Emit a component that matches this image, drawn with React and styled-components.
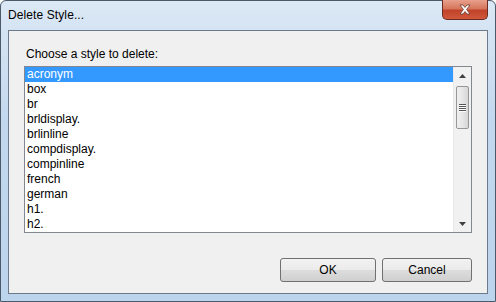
import React, { useState } from 'react';
import styled, { createGlobalStyle } from 'styled-components';

const GlobalStyle = createGlobalStyle`
  html, body {
    margin: 0;
    padding: 0;
    background: #ffffff;
  }
  body {
    font-family: "Liberation Sans", Arial, sans-serif;
    font-size: 12px;
  }
`;

const styles = [
  'acronym',
  'box',
  'br',
  'brldisplay.',
  'brlinline',
  'compdisplay.',
  'compinline',
  'french',
  'german',
  'h1.',
  'h2.',
];

// Aero-ish window frame
const Window = styled.div`
  width: 496px;
  height: 302px;
  box-sizing: border-box;
  display: flex;
  flex-direction: column;
  background: linear-gradient(to bottom, #dbe8f5 0%, #c3d8ee 40%, #bcd4ec 100%);
  border: 1px solid #4a5a6a;
  border-radius: 6px 6px 0 0;
  padding: 0 7px 7px 7px;
`;

const TitleBar = styled.div`
  height: 29px;
  display: flex;
  align-items: flex-start;
  color: #000;
`;

const Title = styled.div`
  padding-top: 7px;
  font-size: 12px;
  letter-spacing: 0.1px;
`;

const CloseButton = styled.div`
  margin-left: auto;
  margin-right: 0;
  margin-top: -1px;
  width: 46px;
  height: 20px;
  box-sizing: border-box;
  border: 1px solid #6b2a22;
  border-top: none;
  border-radius: 0 0 5px 5px;
  background: linear-gradient(to bottom, #e8a08c 0%, #d6765c 45%, #c1432a 55%, #d0583a 100%);
  display: flex;
  align-items: center;
  justify-content: center;
`;

const Client = styled.div`
  flex: 1;
  background: #f0f0f0;
  border: 1px solid #6c7b8c;
  display: flex;
  flex-direction: column;
  padding: 16px 15px 11px 15px;
`;

const Label = styled.div`
  height: 19px;
  padding-left: 2px;
  color: #000;
`;

const ListBox = styled.div`
  height: 167px;
  box-sizing: border-box;
  border: 1px solid #828790;
  background: #fff;
  display: flex;
  overflow: hidden;
`;

const Items = styled.div`
  flex: 1;
  overflow: hidden;
`;

const Item = styled.div`
  height: 15px;
  line-height: 15px;
  padding-left: 2px;
  white-space: nowrap;
  color: ${({ selected }) => (selected ? '#fff' : '#000')};
  background: ${({ selected }) => (selected ? '#3399ff' : 'transparent')};
`;

const ScrollBar = styled.div`
  width: 17px;
  background: #f1f1f1;
  border-left: 1px solid #e8e8e8;
  display: flex;
  flex-direction: column;
  align-items: center;
`;

const Arrow = styled.div`
  height: 17px;
  width: 17px;
  display: flex;
  align-items: center;
  justify-content: center;
`;

const Track = styled.div`
  flex: 1;
  width: 100%;
  display: flex;
  flex-direction: column;
  align-items: center;
`;

const Thumb = styled.div`
  width: 13px;
  height: 43px;
  margin-top: 2px;
  box-sizing: border-box;
  border: 1px solid #979797;
  border-radius: 2px;
  background: linear-gradient(to right, #f0f0f0 0%, #e6e6e6 50%, #d6d6d6 100%);
  display: flex;
  flex-direction: column;
  align-items: center;
  justify-content: center;
  gap: 1px;
`;

const Grip = styled.div`
  width: 7px;
  height: 1px;
  background: #555;
  box-shadow: 0 1px 0 #fff;
`;

const Buttons = styled.div`
  margin-top: auto;
  display: flex;
  justify-content: flex-end;
  gap: 6px;
  padding-right: 0;
`;

const Button = styled.button`
  width: ${({ w }) => w}px;
  height: 24px;
  box-sizing: border-box;
  border: 1px solid #707070;
  border-radius: 3px;
  background: linear-gradient(to bottom, #f2f2f2 0%, #ebebeb 50%, #dddddd 51%, #cfcfcf 100%);
  font-family: "Liberation Sans", Arial, sans-serif;
  font-size: 12px;
  color: #000;
  padding: 0;
`;

const App = () => {
  const [selected, setSelected] = useState(0);

  return (
    <>
      <GlobalStyle />
      <Window>
        <TitleBar>
          <Title>Delete Style...</Title>
          <CloseButton>
            <svg width="14" height="11" viewBox="0 0 14 11">
              <path
                d="M2 1 L5 1 L7 3.5 L9 1 L12 1 L8.6 5.5 L12 10 L9 10 L7 7.5 L5 10 L2 10 L5.4 5.5 Z"
                fill="#fff"
                stroke="#6a3a30"
                strokeWidth="0.8"
              />
            </svg>
          </CloseButton>
        </TitleBar>
        <Client>
          <Label>Choose a style to delete:</Label>
          <ListBox>
            <Items>
              {styles.map((s, i) => (
                <Item key={s} selected={i === selected} onClick={() => setSelected(i)}>
                  {s}
                </Item>
              ))}
            </Items>
            <ScrollBar>
              <Arrow>
                <svg width="7" height="4" viewBox="0 0 7 4">
                  <path d="M0 4 L3.5 0 L7 4 Z" fill="#404040" />
                </svg>
              </Arrow>
              <Track>
                <Thumb>
                  <Grip />
                  <Grip />
                  <Grip />
                  <Grip />
                </Thumb>
              </Track>
              <Arrow>
                <svg width="7" height="4" viewBox="0 0 7 4">
                  <path d="M0 0 L7 0 L3.5 4 Z" fill="#404040" />
                </svg>
              </Arrow>
            </ScrollBar>
          </ListBox>
          <Buttons>
            <Button w={96}>OK</Button>
            <Button w={90}>Cancel</Button>
          </Buttons>
        </Client>
      </Window>
    </>
  );
};

export default App;
